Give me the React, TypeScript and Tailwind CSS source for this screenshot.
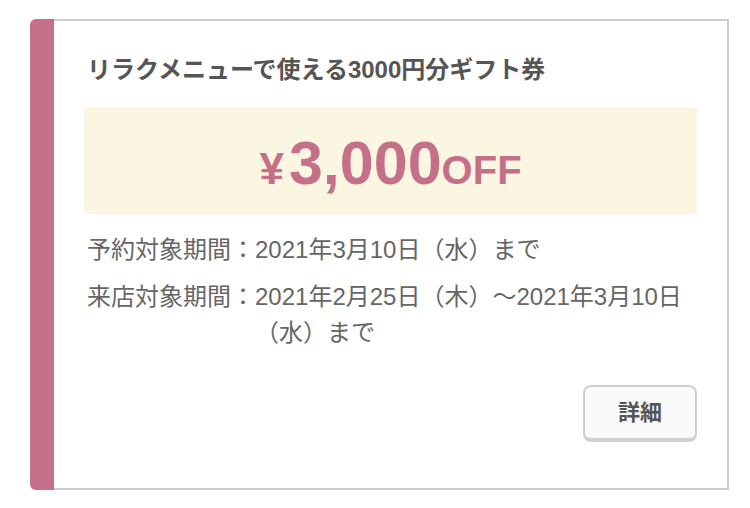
const font = { fontFamily: '"Liberation Sans", "Noto Sans CJK JP", sans-serif' };

export default function App() {
  return (
    <div className="min-h-screen bg-white pl-[30px] pt-[19px]" style={font}>
      <div className="flex w-[699px]">
        {/* accent bar */}
        <div className="w-[24px] shrink-0 rounded-l-[6px] bg-[#c57088]" />

        <div className="flex-1 border-y-2 border-r-2 border-[#cccccc] px-[30px] pb-[46px] pt-[33px]">
          <h2 className="pl-[3px] text-[24px] font-bold leading-[32px] text-[#555555]">
            リラクメニューで使える3000円分ギフト券
          </h2>

          <div className="mt-[21px] flex h-[107px] items-center justify-center bg-[#faf6e1] text-[#c57088]">
            <div className="flex items-baseline pt-[6px] font-bold">
              <span className="mr-[5px] text-[44px] leading-none">¥</span>
              <span className="text-[61px] leading-none">3,000</span>
              <span className="text-[40px] leading-none">OFF</span>
            </div>
          </div>

          <div className="mt-[18px] space-y-[11px] pl-[3px] text-[24px] leading-[36px] text-[#666666]">
            <div className="flex">
              <span className="shrink-0">予約対象期間：</span>
              <span>2021年3月10日（水）まで</span>
            </div>
            <div className="flex">
              <span className="shrink-0">来店対象期間：</span>
              <span>2021年2月25日（木）〜2021年3月10日（水）まで</span>
            </div>
          </div>

          <div className="mt-[34px] flex justify-end">
            <button
              type="button"
              className="h-[57px] w-[114px] rounded-[8px] border-2 border-b-4 border-[#d0d0d0] bg-[#fafafa] text-[22px] font-bold text-[#555555]"
            >
              詳細
            </button>
          </div>
        </div>
      </div>
    </div>
  );
}
